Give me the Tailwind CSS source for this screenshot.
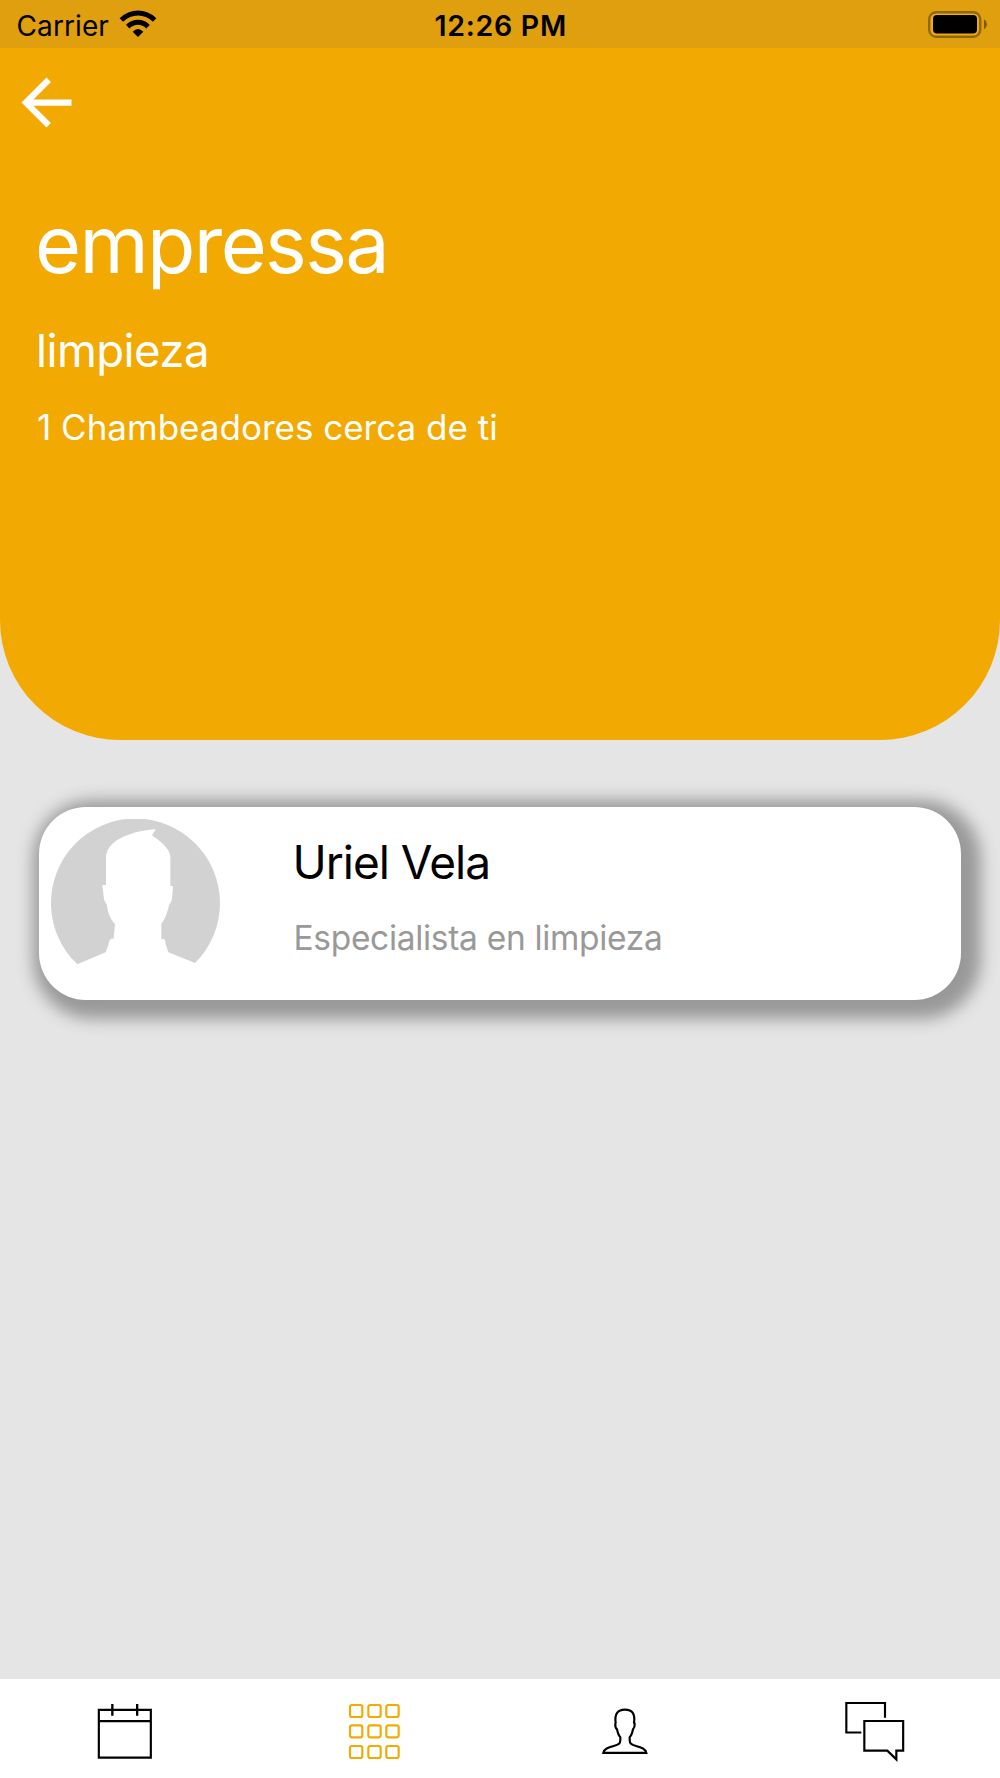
<!DOCTYPE html>
<html lang="es">
<head>
<meta charset="utf-8">
<title>Chambeadores</title>
<script src="https://cdn.jsdelivr.net/npm/@tailwindcss/browser@4"></script>
</head>
<body class="font-[Inter,sans-serif]">
<div class="flex h-[1778px] w-[1000px] flex-col overflow-hidden bg-[#e5e5e5]">
  <header class="h-[740px] overflow-hidden rounded-b-[120px] bg-[#f2a902] text-white">
    <div class="grid h-12 grid-cols-3 bg-[#df9f0e] text-[28px] leading-[52px] text-black">
      <div class="flex pl-[16.5px]">
        <span class="tracking-[0.1px]">Carrier</span>
        <svg class="mt-[9px] ml-[10.5px] h-[30px] w-[38px]" viewBox="359 27 114 90" fill="none" stroke="#000" stroke-width="15">
          <path d="M366 60Q388 39 416 39T466 60"/>
          <path d="M385 80Q399 67 416 67T446 80"/>
          <path d="M400 95Q416 79 432 95L416 111Z" fill="#000" stroke="none"/>
        </svg>
      </div>
      <div class="pl-[1.5px] text-center text-[28.5px] font-semibold tracking-[0.7px] whitespace-nowrap">12:26 PM</div>
      <div class="flex justify-end pt-[10px] pr-[13px]">
        <svg class="h-[29px] w-[60px]" viewBox="0 0 60 29">
          <rect x="2.2" y="2.2" width="51" height="24.6" rx="7" fill="#f0ab0c" stroke="#8f6809" stroke-width="2.4"/>
          <rect x="6" y="5" width="44" height="18.5" rx="4" fill="#000"/>
          <path d="M57 9.200Q60 11 60 14T57 19.500Z" fill="#7d5b08"/>
        </svg>
      </div>
    </div>
    <button class="mt-[17px] ml-[9px] block" aria-label="Volver">
      <svg class="size-[75px]" viewBox="0 0 24 24" fill="#fff"><path d="M20 11H7.830l5.590-5.590L12 4l-8 8 8 8 1.410-1.410L7.830 13H20v-2z"/></svg>
    </button>
    <div class="pt-[56px] pl-[36px]">
      <h1 class="-ml-px text-[79px] leading-[96px] tracking-[-1.6px]">empressa</h1>
      <h2 class="mt-[31px] text-[45.5px] leading-[56px] tracking-[-0.55px]">limpieza</h2>
      <p class="mt-[26px] pl-px text-[35px] leading-[44px]">1 Chambeadores cerca de ti</p>
    </div>
  </header>
  <main class="flex-1 px-[39px] pt-[67px]">
    <article class="flex h-[193px] rounded-[47px] bg-white shadow-[7px_6px_16px_13px_#999]">
      <svg class="mt-[12px] ml-[12px] h-[146px] w-[169px]" viewBox="93 117 507 438">
        <path fill="#d2d2d2" d="M172 553A253.500 253.500 0 1 1 525 549L445 517Q440 502 437 492Q436 477 430 477H424V431C437 416 443 394 447 375Q454 367 456 356L459 318H451V230C449 204 421 183 397 167Q395 163 408 149Q402 146 389 149C327 157 262 181 258 230V315H247L252 358Q255 368 261 376C263 398 272 419 285 432L281 476Q273 475 270 480Q266 484 265 495L257 517Z"/>
      </svg>
      <div class="ml-[72.5px] pt-[27px]">
        <h3 class="text-[46px] leading-[56px] tracking-[-1px] text-black">Uriel Vela</h3>
        <p class="mt-[26px] pl-px text-[33.5px] leading-[44px] tracking-[-0.31px] text-[#999]">Especialista en limpieza</p>
      </div>
    </article>
  </main>
  <nav class="grid h-[99px] grid-cols-4 justify-items-center bg-white">
    <svg class="h-[99px] w-[90px]" viewBox="0 27 270 297" fill="none" stroke="#000" stroke-width="6.500">
      <path d="M56.500 119.500H212.500V263H56.500ZM56 153.500H212"/><path d="M97 102V137M171.500 102V137" stroke-width="7"/>
    </svg>
    <svg class="h-[99px] w-[90px]" viewBox="0 27 270 297" fill="none" stroke="#f3aa03" stroke-width="6.500">
      <rect x="60" y="105" width="37" height="36" rx="6"/><rect x="115" y="105" width="37" height="36" rx="6"/><rect x="169" y="105" width="37" height="36" rx="6"/>
      <rect x="60" y="166" width="37" height="36" rx="6"/><rect x="115" y="166" width="37" height="36" rx="6"/><rect x="169" y="166" width="37" height="36" rx="6"/>
      <rect x="60" y="228" width="37" height="36" rx="6"/><rect x="115" y="228" width="37" height="36" rx="6"/><rect x="169" y="228" width="37" height="36" rx="6"/>
    </svg>
    <svg class="h-[99px] w-[90px]" viewBox="0 27 270 297" fill="none" stroke="#000" stroke-width="6.500">
      <path d="M70 248.500H199C197 236 184 232 168 228C153 224 149 220 149 210V202C155 196 157 188 159 178Q165 172 164 161L162 158C166 132 157 119 135 119S103 132 107 158L106 161Q105 173 111 178C113 188 115 196 121 202V210C121 220 117 224 101 228C85 232 72 236 70 248.500Z"/>
    </svg>
    <svg class="h-[99px] w-[90px]" viewBox="0 27 270 297" fill="none" stroke="#000" stroke-width="6.500">
      <path d="M94 187.500H49V99H165V143M103 153H219.500V242H199V268L172 242H103Z"/>
    </svg>
  </nav>
</div>
</body>
</html>
